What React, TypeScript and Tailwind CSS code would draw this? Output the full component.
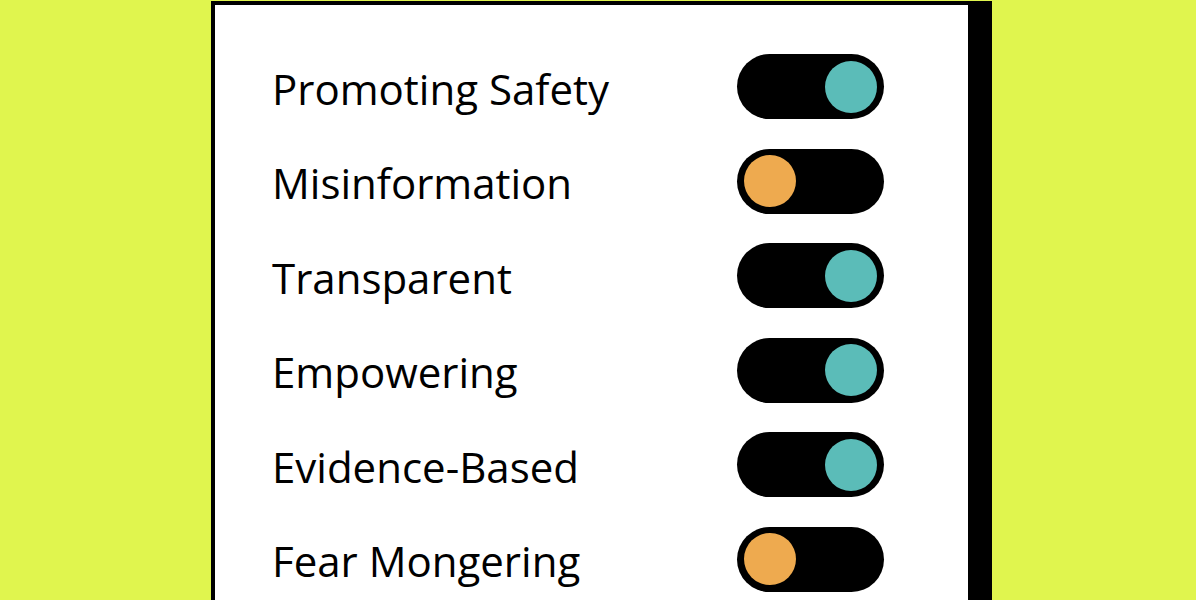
import React from 'react';

const items = [
  { label: 'Promoting Safety', on: true },
  { label: 'Misinformation', on: false },
  { label: 'Transparent', on: true },
  { label: 'Empowering', on: true },
  { label: 'Evidence-Based', on: true },
  { label: 'Fear Mongering', on: false },
];

function Toggle({ on }: { on: boolean }) {
  return (
    <div
      className={
        'w-[147px] h-[65px] rounded-full bg-black flex items-center px-[7px] shrink-0 ' +
        (on ? 'justify-end' : 'justify-start')
      }
    >
      <div className={'w-[52px] h-[52px] rounded-full ' + (on ? 'bg-[#5bbcb8]' : 'bg-[#eeaa4f]')} />
    </div>
  );
}

export default function App() {
  return (
    <div className="w-[1196px] h-[600px] overflow-hidden bg-[#e0f54e] font-['Open_Sans',sans-serif]">
      <div className="ml-[211px] mt-px w-[761px] h-[700px] bg-white border-4 border-black shadow-[20px_0_0_0_#000]">
        <div className="flex flex-col gap-[29.6px] pt-[49px] pl-[57px] pr-[84px]">
          {items.map((item) => (
            <div key={item.label} className="flex items-center justify-between h-[65px]">
              <span className="text-[42px] leading-none text-black translate-y-[2px]">{item.label}</span>
              <Toggle on={item.on} />
            </div>
          ))}
        </div>
      </div>
    </div>
  );
}
